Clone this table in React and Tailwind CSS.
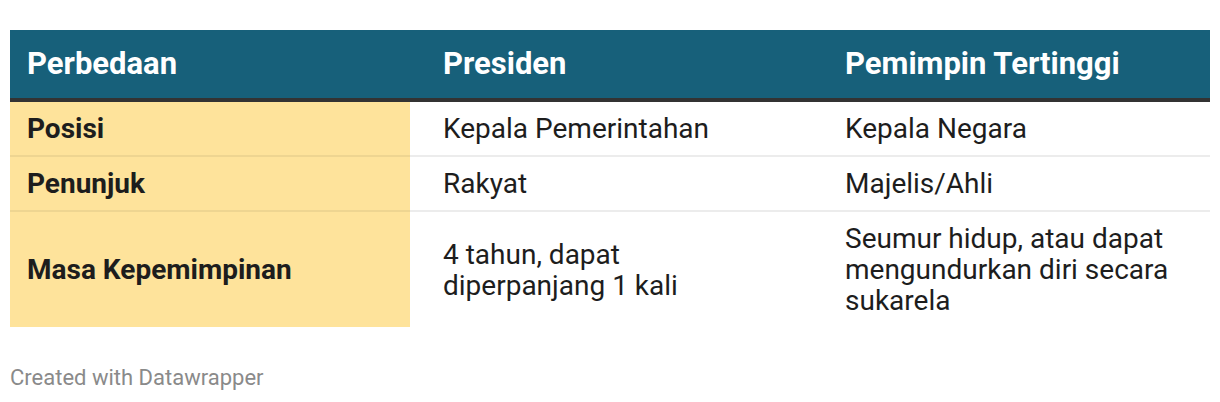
import React from 'react';

const rows = [
  { label: 'Posisi', presiden: ['Kepala Pemerintahan'], pemimpin: ['Kepala Negara'] },
  { label: 'Penunjuk', presiden: ['Rakyat'], pemimpin: ['Majelis/Ahli'] },
  {
    label: 'Masa Kepemimpinan',
    presiden: ['4 tahun, dapat', 'diperpanjang 1 kali'],
    pemimpin: ['Seumur hidup, atau dapat', 'mengundurkan diri secara', 'sukarela'],
  },
];

const Lines = ({ lines }) => (
  <>
    {lines.map((l, i) => (
      <div key={i}>{l}</div>
    ))}
  </>
);

export default function App() {
  return (
    <div className="bg-white w-[1220px] h-[402px] px-[10px] pt-[30px]" style={{ fontFamily: 'Roboto, "Liberation Sans", sans-serif' }}>
      <div className="grid grid-cols-[400px_419px_1fr] w-[1200px]">
        {/* header */}
        <div className="bg-[#17607a] text-white font-bold text-[31px] leading-[34px] py-[17px] pl-[17px] border-b-4 border-[#333]">Perbedaan</div>
        <div className="bg-[#17607a] text-white font-bold text-[31px] leading-[34px] py-[17px] pl-[33px] border-b-4 border-[#333]">Presiden</div>
        <div className="bg-[#17607a] text-white font-bold text-[31px] leading-[34px] py-[17px] pl-[16px] border-b-4 border-[#333]">Pemimpin Tertinggi</div>

        {rows.map((r, i) => {
          const last = i === rows.length - 1;
          return (
            <React.Fragment key={r.label}>
              <div className={`bg-[#fee39b] flex items-center pl-[17px] py-[11px] font-bold text-[28px] leading-[31px] text-[#1d1d1d] ${last ? '' : 'border-b-2 border-[#eed591]'}`}>
                {r.label}
              </div>
              <div className={`flex flex-col justify-center pl-[33px] py-[11px] text-[28px] leading-[31px] text-[#1d1d1d] ${last ? '' : 'border-b-2 border-[#ececec]'}`}>
                <Lines lines={r.presiden} />
              </div>
              <div className={`flex flex-col justify-center pl-[16px] py-[11px] text-[28px] leading-[31px] text-[#1d1d1d] ${last ? '' : 'border-b-2 border-[#ececec]'}`}>
                <Lines lines={r.pemimpin} />
              </div>
            </React.Fragment>
          );
        })}
      </div>
      <div className="mt-[38px] text-[22px] leading-[26px] text-[#8a8a8a]">Created with Datawrapper</div>
    </div>
  );
}
